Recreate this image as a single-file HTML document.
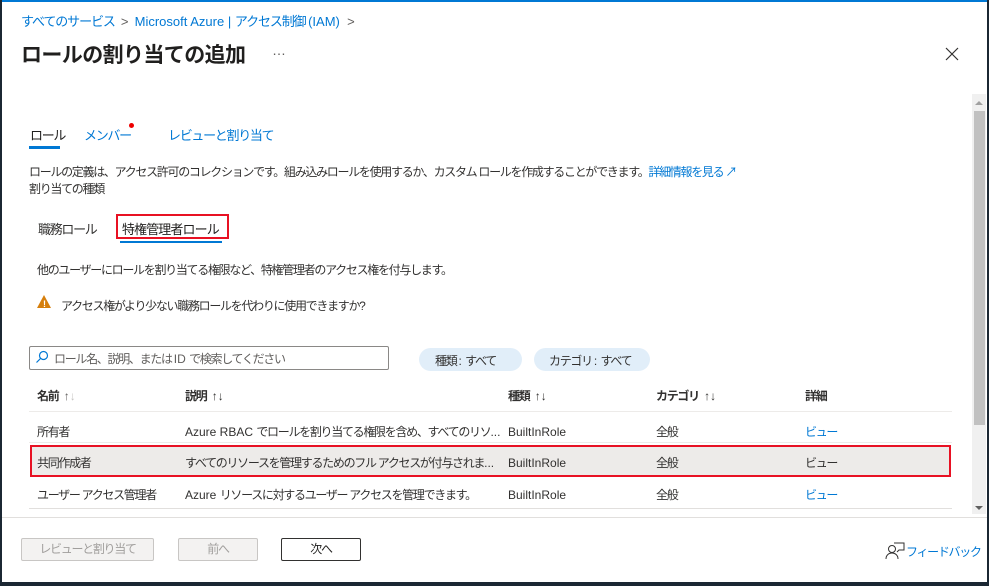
<!DOCTYPE html>
<html><head><meta charset="utf-8"><style>
*{margin:0;padding:0;box-sizing:border-box}
body{width:989px;height:586px;overflow:hidden;background:#fff;font-family:"Liberation Sans","Noto Sans CJK JP",sans-serif;color:#323130;position:relative;font-size:12px;letter-spacing:-1.3px}
.a{position:absolute;white-space:nowrap}
.blue{color:#0078d4}
.l{letter-spacing:0}
</style></head><body>
<div class="a" style="left:0;top:0;width:989px;height:2px;background:#0078d4"></div>
<div class="a" style="left:0;top:0;width:2px;height:586px;background:#1b2733"></div>
<div class="a" style="left:987px;top:0;width:2px;height:586px;background:#1b2733"></div>
<div class="a" style="left:0;top:582px;width:989px;height:4px;background:#1b2733"></div>

<div class="a" style="left:21px;top:11px;font-size:13px;color:#0078d4;letter-spacing:-1.1px">すべてのサービス <span class="l" style="color:#605e5c">&nbsp;&gt;&nbsp;</span> <span class="l">Microsoft Azure | </span>アクセス制御 <span class="l">(IAM) </span><span class="l" style="color:#605e5c">&nbsp;&gt;</span></div>
<div class="a" style="left:21px;top:39px;font-size:21px;font-weight:bold;color:#201f1e;letter-spacing:-0.6px">ロールの割り当ての追加</div>
<div class="a" style="left:272px;top:42px;font-size:14px;color:#605e5c;letter-spacing:0">…</div>
<svg class="a" style="left:945px;top:47px" width="14" height="14"><path d="M1 1L13 13M13 1L1 13" stroke="#323130" stroke-width="1.2"/></svg>

<div class="a" style="left:972px;top:94px;width:14px;height:420px;background:#f0f0f0"></div>
<div class="a" style="left:975px;top:101px;width:0;height:0;border-left:4px solid transparent;border-right:4px solid transparent;border-bottom:4px solid #a0a0a0"></div>
<div class="a" style="left:974px;top:111px;width:11px;height:314px;background:#c1c1c1"></div>
<div class="a" style="left:975px;top:506px;width:0;height:0;border-left:4px solid transparent;border-right:4px solid transparent;border-top:4px solid #606060"></div>

<div class="a" style="left:30px;top:125px;font-size:13px;color:#201f1e">ロール</div>
<div class="a" style="left:29px;top:146px;width:31px;height:3px;background:#0078d4"></div>
<div class="a" style="left:84px;top:125px;font-size:13px;color:#0078d4">メンバー</div>
<div class="a" style="left:129px;top:123px;width:5px;height:5px;border-radius:50%;background:#e00"></div>
<div class="a" style="left:168px;top:125px;font-size:13px;color:#0078d4">レビューと割り当て</div>

<div class="a" style="left:29px;top:163px">ロールの定義は、アクセス許可のコレクションです。組み込みロールを使用するか、カスタム ロールを作成することができます。<span class="blue">詳細情報を見る <span class="l">↗</span></span></div>
<div class="a" style="left:29px;top:180px">割り当ての種類</div>

<div class="a" style="left:38px;top:219px;font-size:13px">職務ロール</div>
<div class="a" style="left:116px;top:214px;width:113px;height:25px;border:2px solid #e81123"></div>
<div class="a" style="left:122px;top:219px;font-size:13px;color:#201f1e;letter-spacing:-0.9px">特権管理者ロール</div>
<div class="a" style="left:120px;top:241px;width:102px;height:2px;background:#0078d4"></div>

<div class="a" style="left:37px;top:261px">他のユーザーにロールを割り当てる権限など、特権管理者のアクセス権を付与します。</div>
<div class="a" style="left:37px;top:295px;width:0;height:0;border-left:7px solid transparent;border-right:7px solid transparent;border-bottom:13px solid #d67f0c"></div>
<div class="a" style="left:43px;top:299px;font-size:9px;color:#fff;font-weight:bold">!</div>
<div class="a" style="left:61px;top:297px">アクセス権がより少ない職務ロールを代わりに使用できますか<span class="l">?</span></div>

<div class="a" style="left:29px;top:346px;width:360px;height:24px;border:1px solid #8a8886;border-radius:2px"></div>
<svg class="a" style="left:35px;top:350px" width="14" height="14"><circle cx="8.5" cy="5.5" r="4" fill="none" stroke="#0078d4" stroke-width="1.2"/><line x1="5.5" y1="8.5" x2="1.5" y2="12.5" stroke="#0078d4" stroke-width="1.2"/></svg>
<div class="a" style="left:54px;top:350px;color:#605e5c">ロール名、説明、または <span class="l">ID </span>で検索してください</div>
<div class="a" style="left:419px;top:348px;width:103px;height:23px;border-radius:12px;background:#e1eef9"></div>
<div class="a" style="left:435px;top:352px">種類 <span class="l">: </span>すべて</div>
<div class="a" style="left:534px;top:348px;width:116px;height:23px;border-radius:12px;background:#e1eef9"></div>
<div class="a" style="left:549px;top:352px">カテゴリ <span class="l">: </span>すべて</div>

<div class="a" style="left:37px;top:387px;font-weight:bold">名前 <span class="l" style="font-weight:normal;color:#605e5c">&nbsp;↑<span style="color:#c8c6c4">↓</span></span></div>
<div class="a" style="left:185px;top:387px;font-weight:bold">説明 <span class="l" style="font-weight:normal">&nbsp;↑↓</span></div>
<div class="a" style="left:508px;top:387px;font-weight:bold">種類 <span class="l" style="font-weight:normal">&nbsp;↑↓</span></div>
<div class="a" style="left:656px;top:387px;font-weight:bold">カテゴリ <span class="l" style="font-weight:normal">&nbsp;↑↓</span></div>
<div class="a" style="left:805px;top:387px;font-weight:bold">詳細</div>
<div class="a" style="left:29px;top:411px;width:923px;height:1px;background:#edebe9"></div>

<div class="a" style="left:37px;top:423px">所有者</div>
<div class="a" style="left:185px;top:423px"><span class="l">Azure RBAC </span>でロールを割り当てる権限を含め、すべてのリソ<span class="l">...</span></div>
<div class="a l" style="left:508px;top:425px">BuiltInRole</div>
<div class="a" style="left:656px;top:423px">全般</div>
<div class="a blue" style="left:805px;top:423px">ビュー</div>
<div class="a" style="left:29px;top:442px;width:923px;height:1px;background:#edebe9"></div>

<div class="a" style="left:30px;top:445px;width:921px;height:32px;background:#edebe9;border:2px solid #e81123"></div>
<div class="a" style="left:37px;top:454px">共同作成者</div>
<div class="a" style="left:185px;top:454px">すべてのリソースを管理するためのフル アクセスが付与されま<span class="l">...</span></div>
<div class="a l" style="left:508px;top:456px">BuiltInRole</div>
<div class="a" style="left:656px;top:454px">全般</div>
<div class="a" style="left:805px;top:454px">ビュー</div>

<div class="a" style="left:37px;top:486px">ユーザー アクセス管理者</div>
<div class="a" style="left:185px;top:486px"><span class="l">Azure </span>リソースに対するユーザー アクセスを管理できます。</div>
<div class="a l" style="left:508px;top:488px">BuiltInRole</div>
<div class="a" style="left:656px;top:486px">全般</div>
<div class="a blue" style="left:805px;top:486px">ビュー</div>
<div class="a" style="left:29px;top:508px;width:923px;height:1px;background:#e1dfdd"></div>

<div class="a" style="left:2px;top:517px;width:985px;height:1px;background:#e1dfdd"></div>
<div class="a" style="left:21px;top:538px;width:133px;height:23px;border:1px solid #c8c6c4;background:#f3f2f1;border-radius:2px;color:#a19f9d;text-align:center;line-height:21px">レビューと割り当て</div>
<div class="a" style="left:178px;top:538px;width:80px;height:23px;border:1px solid #c8c6c4;background:#f3f2f1;border-radius:2px;color:#a19f9d;text-align:center;line-height:21px">前へ</div>
<div class="a" style="left:281px;top:538px;width:80px;height:23px;border:1px solid #323130;background:#fff;border-radius:2px;color:#201f1e;text-align:center;line-height:21px">次へ</div>
<svg class="a" style="left:885px;top:542px" width="20" height="18"><circle cx="7" cy="7" r="3.5" fill="none" stroke="#323130"/><path d="M1 17c0-4 3-6 6-6s6 2 6 6" fill="none" stroke="#323130"/><path d="M9 1h10v7h-5l-2 2" fill="none" stroke="#323130"/></svg>
<div class="a blue" style="left:906px;top:543px">フィードバック</div>
</body></html>
